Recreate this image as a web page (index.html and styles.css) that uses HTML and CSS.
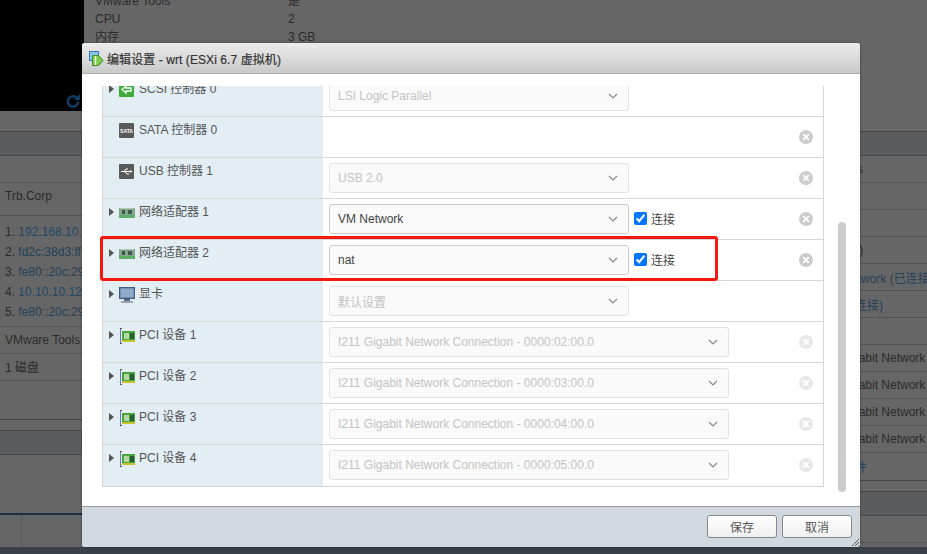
FILE: index.html
```html
<!DOCTYPE html>
<html lang="zh">
<head>
<meta charset="utf-8">
<title>编辑设置 - wrt</title>
<link rel="stylesheet" href="styles.css">
</head>
<body>
<svg class="defs" width="0" height="0">
  <symbol id="i-arrow" viewBox="0 0 5 8"><path d="M0 0l5 4-5 4z" fill="#555"/></symbol>
  <symbol id="i-nic" viewBox="0 0 16 10"><rect width="16" height="7" fill="#84a88e"/><rect y="7" width="16" height="3" fill="#5fae67"/><rect x="3" y="2" width="3" height="4" fill="#3f5a47"/><rect x="9" y="2" width="4" height="4" fill="#3f5a47"/><path d="M1 .5h14" stroke="#aec9b5"/></symbol>
  <symbol id="i-pci" viewBox="0 0 16 16"><path d="M.5 0v16" stroke="#6f7aa8"/><path d="M0 .5h2M0 15.500h2" stroke="#555"/><rect x="2" y="3" width="13" height="11" fill="#46a53c"/><rect x="2" y="12" width="13" height="2" fill="#c9c22e"/><rect x="4" y="5" width="5" height="6" fill="#b5d9a4"/><rect x="10" y="5" width="4" height="6" fill="#2a5c34"/></symbol>
  <symbol id="i-x" viewBox="0 0 14 14"><circle cx="7" cy="7" r="7" fill="currentColor"/><path d="M4.200 4.200l5.600 5.600M9.800 4.200l-5.600 5.600" stroke="#fff" stroke-width="1.800"/></symbol>
  <symbol id="i-chev" viewBox="0 0 10 6"><path d="M1 1l4 4 4-4" fill="none" stroke="#888" stroke-width="1.200"/></symbol>
</svg>

<div class="backdrop">
  <div class="col col-left">
    <div class="console">
      <svg class="refresh" viewBox="0 0 16 16" width="15" height="15"><path d="M13 8a5.500 5.500 0 1 1-2-4.300" fill="none" stroke="#0f3f66" stroke-width="2.600"/><path d="M8.500 6.500H15V0z" fill="#0f3f66"/></svg>
    </div>
    <div class="row h20"></div>
    <div class="row h24 head"></div>
    <div class="row h27"></div>
    <div class="row h33 text up6">Trb.Corp</div>
    <div class="row ips">
      <div>1. <span class="link">192.168.10.1</span></div>
      <div>2. <span class="link2">fd2c:38d3:ff</span></div>
      <div>3. <span class="link2">fe80::20c:29</span></div>
      <div>4. <span class="link">10.10.10.12</span></div>
      <div>5. <span class="link2">fe80::20c:29</span></div>
    </div>
    <div class="row h27 text">VMware Tools</div>
    <div class="row h27 text up2">1 磁盘</div>
    <div class="row h39"></div>
    <div class="row h11"></div>
    <div class="row h24 head"></div>
    <div class="row h60 blue"></div>
    <div class="tabs"><div class="tab"></div></div>
  </div>

  <div class="col col-center">
    <div class="info">
      <div class="info-row cut"><span class="k">VMware Tools</span><span>是</span></div>
      <div class="info-row"><span class="k">CPU</span><span>2</span></div>
      <div class="info-row"><span class="k">内存</span><span>3 GB</span></div>
    </div>
  </div>

  <div class="col col-right">
    <div class="row h20"></div>
    <div class="row h24 head"></div>
    <div class="row h27 text p35">Tools</div>
    <div class="row h27"></div>
    <div class="row h27 text link2 p58">.</div>
    <div class="row h27 text p46">10)</div>
    <div class="row h27 text link2 p21">VM Network (已连接)</div>
    <div class="row h27 text link2 p19">nat (已连接)</div>
    <div class="row h27"></div>
    <div class="row h27 text p40">Gigabit Network</div>
    <div class="row h27 text p40">Gigabit Network</div>
    <div class="row h27 text p40">Gigabit Network</div>
    <div class="row h27 text p40">Gigabit Network</div>
    <div class="row h28 text link2 p43">硬件</div>
    <div class="row h11"></div>
    <div class="row h24 head"></div>
    <div class="row h27"></div>
  </div>
</div>

<div class="bottom-bar"></div>

<div class="dialog">
  <div class="titlebar">
    <svg class="title-icon" viewBox="0 0 15 15" width="15" height="15">
      <rect x=".5" y=".5" width="9" height="9" fill="#8fc4ea" stroke="#2f77b5"/>
      <path d="M3.500 4.500h6l4.500 5-4.500 5h-6z" fill="#7ccb4a" stroke="#3f8f2c"/>
      <path d="M6.500 5v9" stroke="#e8f6d8" stroke-width="1.500"/>
    </svg>
    <span class="title">编辑设置 - wrt (ESXi 6.7 虚拟机)</span>
  </div>

  <div class="body">
    <div class="scroller">
      <div class="table">
        <div class="tr">
          <div class="th">
            <svg class="arrow"><use href="#i-arrow"/></svg>
            <svg class="ico" viewBox="0 0 15 15"><rect width="15" height="15" rx="1" fill="#3eaa3a"/><path d="M3 7.500l4-3.500v2h5v3H7v2z" fill="none" stroke="#fff" stroke-width="1.300"/></svg>
            <span>SCSI 控制器 0</span>
          </div>
          <div class="td"><div class="sel off"><span>LSI Logic Parallel</span><svg class="chev"><use href="#i-chev"/></svg></div></div>
        </div>
        <div class="tr">
          <div class="th noarrow">
            <svg class="ico" viewBox="0 0 15 15"><rect width="15" height="15" rx="1" fill="#5a5a5a"/><text x="7.500" y="10" class="sata">SATA</text></svg>
            <span>SATA 控制器 0</span>
          </div>
          <div class="td"><svg class="x"><use href="#i-x"/></svg></div>
        </div>
        <div class="tr">
          <div class="th noarrow">
            <svg class="ico" viewBox="0 0 15 15"><rect width="15" height="15" rx="1" fill="#5a5a5a"/><path d="M2 7.500h11M5 7.500l2-2.500h2M6 7.500l2 2.500h2" fill="none" stroke="#fff"/><path d="M13.500 7.500L11 6v3z" fill="#fff"/></svg>
            <span>USB 控制器 1</span>
          </div>
          <div class="td"><div class="sel off"><span>USB 2.0</span><svg class="chev"><use href="#i-chev"/></svg></div><svg class="x"><use href="#i-x"/></svg></div>
        </div>
        <div class="tr">
          <div class="th">
            <svg class="arrow"><use href="#i-arrow"/></svg>
            <svg class="nic"><use href="#i-nic"/></svg>
            <span>网络适配器 1</span>
          </div>
          <div class="td"><div class="sel"><span>VM Network</span><svg class="chev"><use href="#i-chev"/></svg></div><label class="conn"><input type="checkbox" checked>连接</label><svg class="x"><use href="#i-x"/></svg></div>
        </div>
        <div class="tr">
          <div class="th">
            <svg class="arrow"><use href="#i-arrow"/></svg>
            <svg class="nic"><use href="#i-nic"/></svg>
            <span>网络适配器 2</span>
          </div>
          <div class="td"><div class="sel"><span>nat</span><svg class="chev"><use href="#i-chev"/></svg></div><label class="conn"><input type="checkbox" checked>连接</label><svg class="x"><use href="#i-x"/></svg></div>
        </div>
        <div class="tr">
          <div class="th">
            <svg class="arrow"><use href="#i-arrow"/></svg>
            <svg class="ico mon" viewBox="0 0 16 16"><rect x=".5" y=".5" width="15" height="11" fill="#6f8fb5" stroke="#47597a"/><rect x="2" y="2" width="12" height="8" fill="#8fa9c9"/><rect x="5" y="12" width="6" height="2" fill="#5a6a85"/><rect x="2" y="14" width="12" height="2" fill="#9aa6b8"/></svg>
            <span>显卡</span>
          </div>
          <div class="td"><div class="sel off"><span>默认设置</span><svg class="chev"><use href="#i-chev"/></svg></div></div>
        </div>
        <div class="tr">
          <div class="th">
            <svg class="arrow"><use href="#i-arrow"/></svg>
            <svg class="pci"><use href="#i-pci"/></svg>
            <span>PCI 设备 1</span>
          </div>
          <div class="td"><div class="sel off wide"><span>I211 Gigabit Network Connection - 0000:02:00.0</span><svg class="chev"><use href="#i-chev"/></svg></div><svg class="x dim"><use href="#i-x"/></svg></div>
        </div>
        <div class="tr">
          <div class="th">
            <svg class="arrow"><use href="#i-arrow"/></svg>
            <svg class="pci"><use href="#i-pci"/></svg>
            <span>PCI 设备 2</span>
          </div>
          <div class="td"><div class="sel off wide"><span>I211 Gigabit Network Connection - 0000:03:00.0</span><svg class="chev"><use href="#i-chev"/></svg></div><svg class="x dim"><use href="#i-x"/></svg></div>
        </div>
        <div class="tr">
          <div class="th">
            <svg class="arrow"><use href="#i-arrow"/></svg>
            <svg class="pci"><use href="#i-pci"/></svg>
            <span>PCI 设备 3</span>
          </div>
          <div class="td"><div class="sel off wide"><span>I211 Gigabit Network Connection - 0000:04:00.0</span><svg class="chev"><use href="#i-chev"/></svg></div><svg class="x dim"><use href="#i-x"/></svg></div>
        </div>
        <div class="tr">
          <div class="th">
            <svg class="arrow"><use href="#i-arrow"/></svg>
            <svg class="pci"><use href="#i-pci"/></svg>
            <span>PCI 设备 4</span>
          </div>
          <div class="td"><div class="sel off wide"><span>I211 Gigabit Network Connection - 0000:05:00.0</span><svg class="chev"><use href="#i-chev"/></svg></div><svg class="x dim"><use href="#i-x"/></svg></div>
        </div>
      </div>
    </div>
    <div class="thumb"></div>
    <div class="annotation"></div>
  </div>

  <div class="footer">
    <button class="btn" type="button">保存</button>
    <button class="btn" type="button">取消</button>
    <svg class="grip" viewBox="0 0 7 7" width="7" height="7"><path d="M0 7l7-7M3 7l4-4M6 7l1-1" stroke="#555" fill="none"/></svg>
  </div>
</div>
</body>
</html>
```
FILE: styles.css
```css
* { box-sizing: border-box; }
html, body { margin: 0; height: 100%; }
body {
  position: relative;
  width: 927px;
  height: 554px;
  overflow: hidden;
  background: #666;
  font: 12px "Liberation Sans", "Noto Sans CJK SC", sans-serif;
  color: #2b2b2b;
}
.defs { position: absolute; }

/* dimmed page behind the modal */
.backdrop { display: flex; justify-content: space-between; height: 547px; }
.col { flex: none; }
.col-left { width: 84px; overflow: hidden; }
.col-center { flex: 1; padding-left: 11px; overflow: hidden; }
.col-right { width: 127px; padding-top: 111px; overflow: hidden; }

.console { height: 111px; background: #000; display: flex; align-items: flex-end; justify-content: flex-end; padding: 0 3px 2px 0; }
.refresh { display: block; }

.row { border-bottom: 1px solid #525252; white-space: nowrap; }
.h11 { height: 11px; border-bottom-color: #444; }
.h20 { height: 21px; border-bottom-color: #444; }
.h24 { height: 24px; border-bottom-color: #484848; }
.h27 { height: 27px; }
.h28 { height: 28px; border-bottom-color: #444; }
.h33 { height: 33px; }
.h39 { height: 39px; border-bottom-color: #444; }
.h60 { height: 60px; }
.head { background: #5b5c5e; }
.blue { border-bottom: 2px solid #1b3042; }
.text { display: flex; align-items: center; padding-left: 5px; }
.up6 { padding-bottom: 6px; }
.up2 { padding-bottom: 2px; }
.ips { height: 111px; padding: 6px 0 0 5px; line-height: 20px; }
.link { color: #1e4666; }
.link2 { color: #24415a; }
.p19 { padding-left: 19px; }
.p21 { padding-left: 21px; }
.p35 { padding-left: 35px; }
.p40 { padding-left: 40px; }
.p43 { padding-left: 43px; }
.p46 { padding-left: 46px; }
.p58 { padding-left: 58px; }

.tabs { height: 32px; }
.tab { width: 22px; height: 100%; border-right: 1px solid #5a5a5a; }

.info { margin-top: -8px; line-height: 18px; }
.info-row { display: flex; height: 18px; }
.k { width: 193px; }

.bottom-bar { height: 7px; background: #3a4047; }

/* modal */
.dialog {
  position: absolute;
  left: 82px;
  top: 43px;
  width: 778px;
  height: 504px;
  display: flex;
  flex-direction: column;
  border-radius: 3px;
  background: #fff;
  box-shadow: 0 0 2px rgba(0, 0, 0, .6);
  overflow: hidden;
}
.titlebar {
  flex: none;
  height: 31px;
  display: flex;
  align-items: center;
  gap: 3px;
  padding-left: 7px;
  background: linear-gradient(#ececec, #c9c9c9);
  border-bottom: 1px solid #aaa;
}
.title-icon { flex: none; }
.title { color: #333; -webkit-text-stroke: .2px #333; letter-spacing: .08px; }

.body { position: relative; flex: 1; padding: 12px 36px 0 20px; min-height: 0; }
.scroller { height: 100%; overflow: hidden; }
.table { margin-top: -10px; width: 722px; border: 1px solid #d6d6d6; border-top: 0; }
.tr { display: flex; height: 41px; border-bottom: 1px solid #d6d6d6; }
.tr:last-child { border-bottom: 0; }
.th {
  flex: none;
  width: 220px;
  display: flex;
  align-items: flex-start;
  padding: 6px 0 0 6px;
  background: #e2edf4;
  color: #555;
  line-height: 14px;
}
.th.noarrow { padding-left: 16px; }
.arrow { flex: none; width: 5px; height: 8px; margin: 3px 5px 0 0; }
.ico { flex: none; width: 15px; height: 15px; margin: 0 5px 0 0; }
.ico.mon { width: 16px; height: 16px; margin-right: 4px; }
.sata { font: bold 5px "Liberation Sans", sans-serif; fill: #fff; text-anchor: middle; }
.nic { flex: none; width: 16px; height: 10px; margin: 3px 4px 0 0; }
.pci { flex: none; width: 16px; height: 16px; margin: 0 3px 0 1px; }

.td { position: relative; flex: 1; display: flex; align-items: flex-start; padding: 5px 0 0 6px; }
.sel {
  flex: none;
  width: 300px;
  height: 30px;
  display: flex;
  align-items: center;
  justify-content: space-between;
  padding: 0 10px 0 8px;
  border: 1px solid #ccc;
  border-radius: 3px;
  background: #fafafa;
  color: #444;
}
.sel.off { border-color: #e2e2e2; color: #c4c4c4; }
.sel.wide { width: 400px; }
.chev { flex: none; width: 10px; height: 6px; }

.conn { display: flex; align-items: center; gap: 4px; height: 28px; margin-left: 5px; color: #444; }
.conn input { width: 13px; height: 13px; margin: 0; accent-color: #0075ff; }

.x { position: absolute; right: 10px; top: 13px; width: 14px; height: 14px; color: #ccc; }
.x.dim { color: #e8e8e8; }

.thumb { position: absolute; left: 756px; top: 148px; width: 8px; height: 270px; border-radius: 4px; background: #ccc; }
.annotation {
  position: absolute;
  left: 18px;
  top: 162px;
  width: 618px;
  height: 45px;
  border: 3px solid #f4190f;
  border-radius: 3px;
  pointer-events: none;
}

.footer {
  position: relative;
  flex: none;
  height: 41px;
  display: flex;
  justify-content: flex-end;
  gap: 5px;
  padding: 8px 8px 0 0;
  background: #d1d8e0;
  border-top: 1px solid #999;
}
.btn {
  width: 70px;
  height: 23px;
  padding: 0 0 1px;
  border: 1px solid #888;
  border-radius: 3px;
  background: linear-gradient(#fff, #efefef);
  color: #555;
  font: inherit;
}
.grip { position: absolute; right: 1px; bottom: 1px; }
```
